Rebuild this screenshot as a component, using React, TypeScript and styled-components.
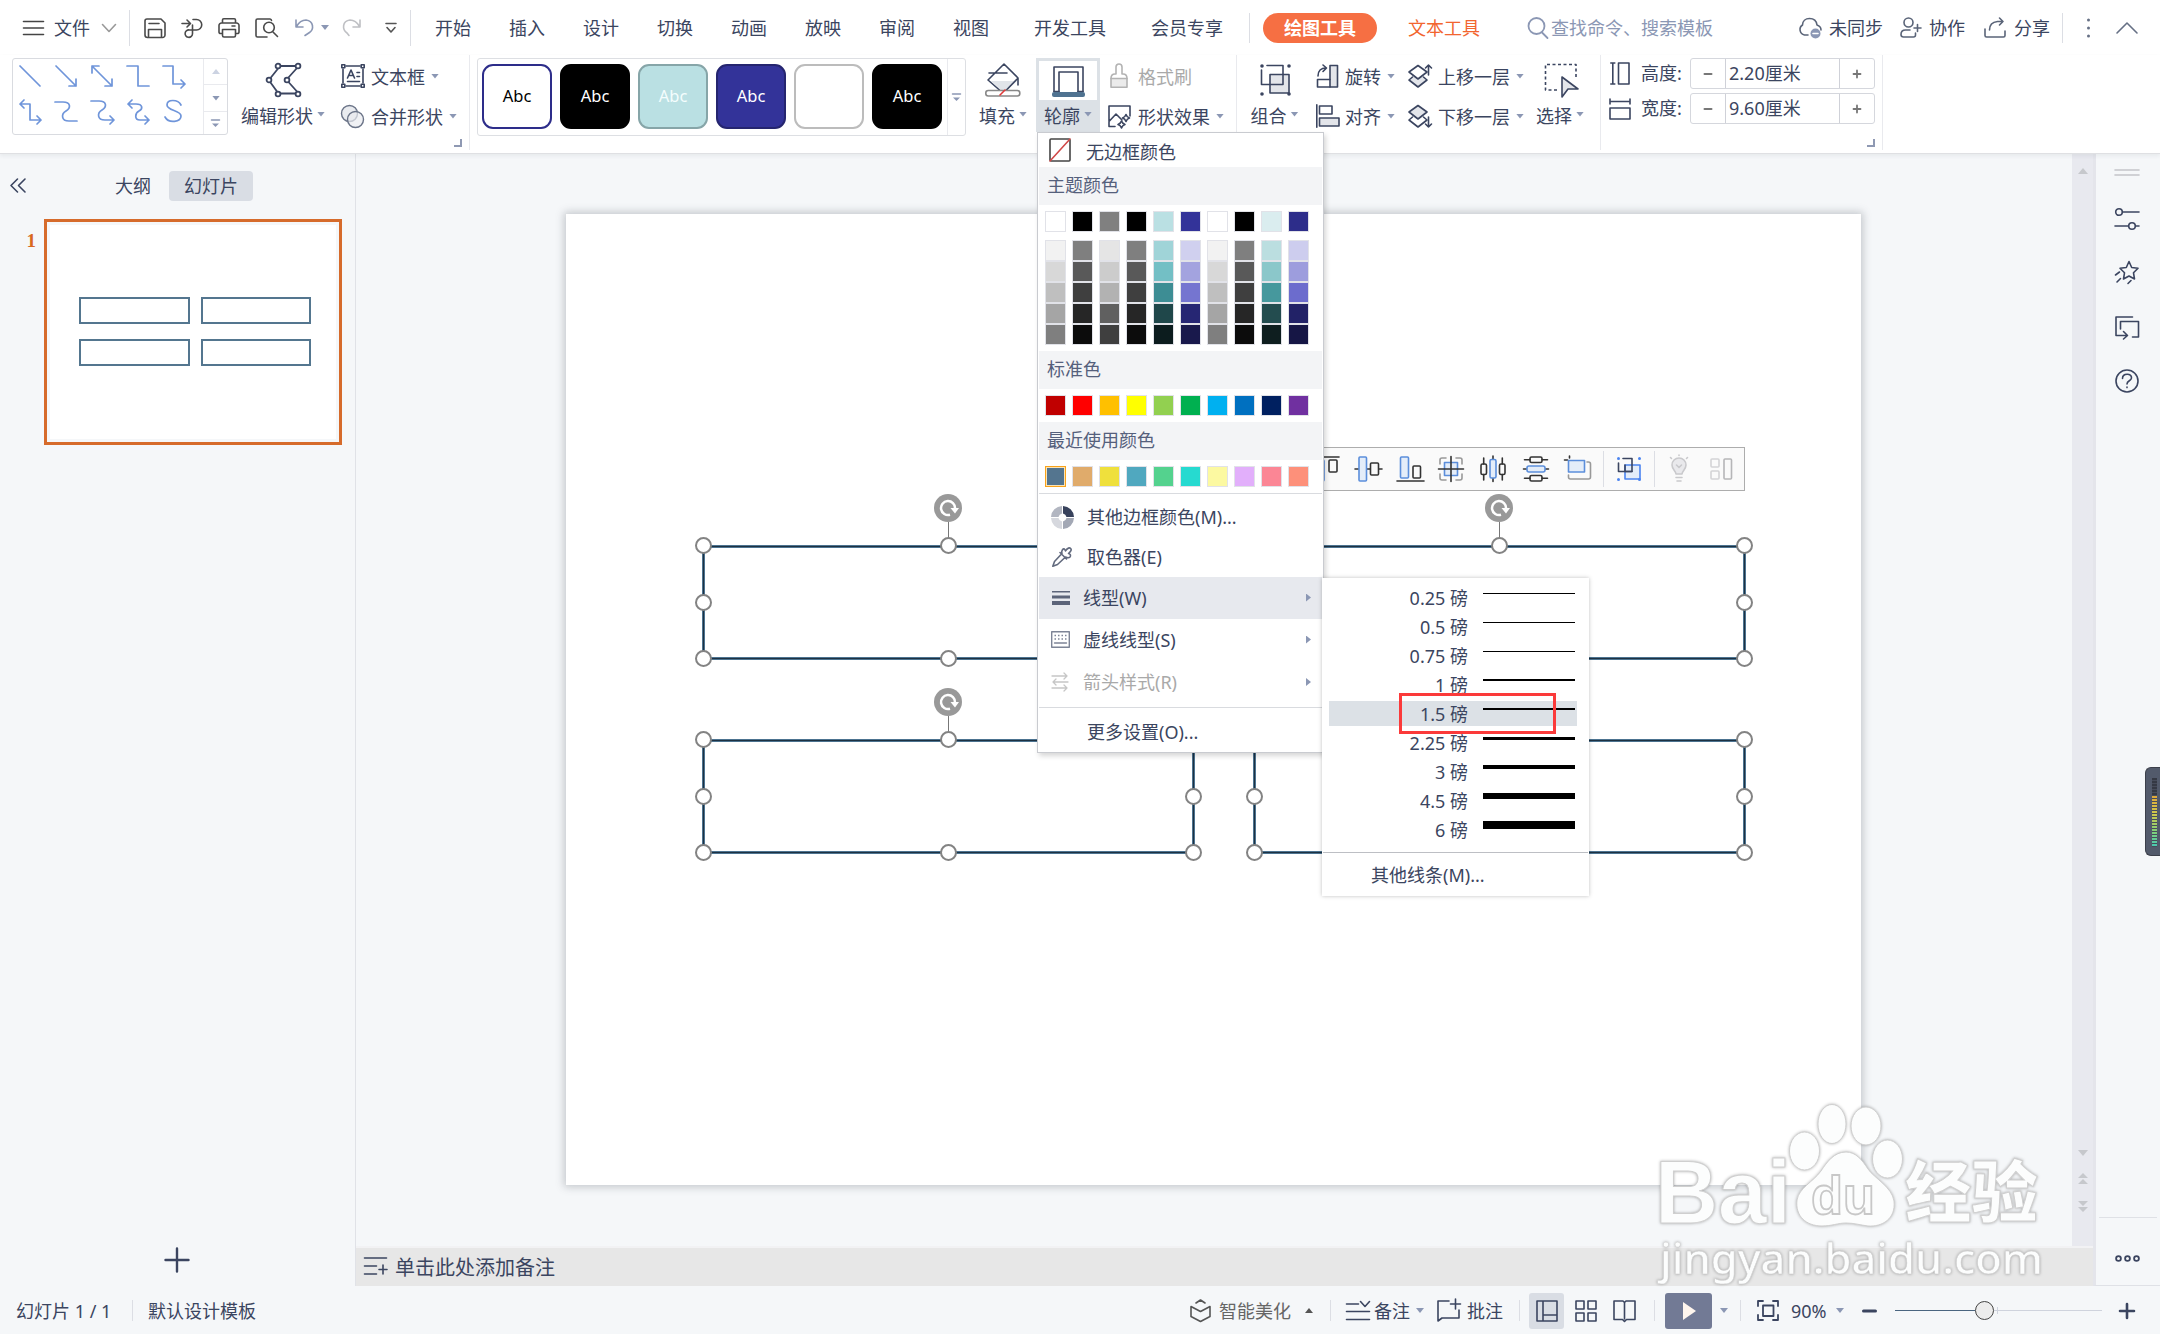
import React from 'react';
import styled, { createGlobalStyle, css } from 'styled-components';

const INK = '#3b4560';
const MUTED = '#8b97b4';

const Global = createGlobalStyle`
  * { box-sizing: border-box; }
  body { margin: 0; background: #fff; }
`;

const Window = styled.div`
  position: relative;
  width: 2160px;
  height: 1334px;
  display: flex;
  flex-direction: column;
  overflow: hidden;
  background: #f5f7f9;
  color: ${INK};
  font-family: 'Noto Sans', 'Noto Sans CJK SC', sans-serif;
  font-size: 18px;
  line-height: 1;
  font-weight: 400;
`;

/* ---------- shared parts ---------- */

const Svg = styled.svg<{ $ml?: number; $dy?: number }>`
  display: block;
  flex: none;
  overflow: visible;
  margin-left: ${(p) => p.$ml || 0}px;
  margin-top: ${(p) => p.$dy || 0}px;
`;

type IconProps = {
  w: number; h: number; c?: string; sw?: number; ml?: number; dy?: number; children: React.ReactNode;
};
const Icon = ({ w, h, c = INK, sw = 1.6, ml, dy, children }: IconProps) => (
  <Svg $ml={ml} $dy={dy} width={w} height={h} viewBox={`0 0 ${w} ${h}`} fill="none" stroke={c} strokeWidth={sw}
    strokeLinecap="round" strokeLinejoin="round">
    {children}
  </Svg>
);

const Caret = styled.i<{ $ml?: number; $up?: boolean; $c?: string }>`
  flex: none;
  width: 8px;
  height: 5px;
  margin-left: ${(p) => p.$ml || 0}px;
  margin-right: -1px;
  background: ${(p) => p.$c || MUTED};
  clip-path: ${(p) => (p.$up ? 'polygon(50% 0, 100% 100%, 0 100%)' : 'polygon(0 0, 100% 0, 50% 100%)')};
`;

const Text = styled.span<{ $ml?: number; $c?: string; $dy?: number }>`
  flex: none;
  white-space: nowrap;
  margin-left: ${(p) => p.$ml || 0}px;
  padding-top: ${(p) => p.$dy || 0}px;
  color: ${(p) => p.$c || 'inherit'};
`;

const Rule = styled.i<{ $ml?: number; $h: number }>`
  flex: none;
  width: 1px;
  height: ${(p) => p.$h}px;
  margin-left: ${(p) => p.$ml || 0}px;
  background: #dcdee4;
`;

const MoreMark = ({ c = MUTED }: { c?: string }) => (
  <Icon w={9} h={9} c={c} sw={1.5}>
    <path d="M0.5 1h8" />
    <path d="M1 4.5h7L4.500 8z" fill={c} stroke="none" />
  </Icon>
);

/* ---------- tab bar ---------- */

const TabBar = styled.header`
  display: flex;
  align-items: center;
  flex: none;
  height: 55px;
  padding-left: 23px;
  background: #fff;
`;

const Tabs = styled.nav`
  display: flex;
  gap: 38px;
  margin-left: 24px;
`;

const ActiveTab = styled.span`
  display: flex;
  align-items: center;
  justify-content: center;
  width: 114px;
  height: 30px;
  margin-left: 13px;
  border-radius: 15px;
  background: #f66f43;
  color: #fff;
  font-weight: 700;
`;

const TopTabs = () => (
  <TabBar>
    <Icon w={21} h={16} c="#444"><path d="M0.500 1.500h20M0.500 8h20M0.500 14.500h20" /></Icon>
    <Text $ml={10}>文件</Text>
    <Icon w={14} h={8} c="#999" ml={12}><path d="M0.5 0.500l6.500 7 6.500-7" /></Icon>
    <Rule $ml={13} $h={36} />
    <Icon w={22} h={20} c="#4a4a4a" ml={14}>
      <path d="M3 1h14l4 4v12a2.500 2.500 0 0 1-2.500 2.500h-15A2.500 2.500 0 0 1 1 17V3a2 2 0 0 1 2-2zM4.500 19v-7.500h13V19M5 5.500h10" />
    </Icon>
    <Icon w={22} h={20} c="#4a4a4a" ml={15}>
      <path d="M1 5.500h8M6 2l3.500 3.500L6 9M12 1.500h3.500a5 5 0 0 1 0 10.500H8.500a3.700 3.700 0 1 0 3 3.700V7" />
    </Icon>
    <Icon w={22} h={20} c="#4a4a4a" ml={15}>
      <path d="M4.500 5V2a1.300 1.300 0 0 1 1.300-1.300h10.400A1.300 1.300 0 0 1 17.500 2v3M4 15.500H2.500A1.500 1.500 0 0 1 1 14V7.500A2.500 2.500 0 0 1 3.500 5h15A2.500 2.500 0 0 1 21 7.500V14a1.500 1.500 0 0 1-1.500 1.500H18M4.500 11.500h13v6a1.500 1.500 0 0 1-1.500 1.500H6a1.500 1.500 0 0 1-1.500-1.500zM14 8h3" />
    </Icon>
    <Icon w={23} h={20} c="#4a4a4a" ml={15}>
      <path d="M16.500 2.500A1.600 1.600 0 0 0 15 1H2.500A1.500 1.500 0 0 0 1 2.500v15A1.500 1.500 0 0 0 2.500 19H12M18 14l4.500 4.500" />
      <circle cx="14" cy="9.500" r="5.300" />
    </Icon>
    <Icon w={18} h={17} c={MUTED} ml={17}><path d="M1 1v7h7M1.500 7.500C4 3 7.500 1 11 1c8 1 8 9.500 3.500 12.500L10 16.500" /></Icon>
    <Caret $ml={8} />
    <Icon w={18} h={17} c="#bfc0c4" ml={15}><path d="M17 1v7h-7M16.500 7.500C14 3 10.500 1 7 1c-8 1-8 9.500-3 13l2 2.500" /></Icon>
    <Icon w={12} h={11} c="#555" ml={24}><path d="M1 1.500h10M2 5.500l4 4.500 4-4.500" /></Icon>
    <Rule $ml={13} $h={36} />
    <Tabs>
      {['开始', '插入', '设计', '切换', '动画', '放映', '审阅', '视图'].map((t) => <Text key={t}>{t}</Text>)}
    </Tabs>
    <Text $ml={45}>开发工具</Text>
    <Text $ml={45}>会员专享</Text>
    <Rule $ml={26} $h={30} />
    <ActiveTab>绘图工具</ActiveTab>
    <Text $ml={31} $c="#f2652f">文本工具</Text>
    <Icon w={22} h={22} c={MUTED} ml={47} sw={1.8}><circle cx="9.500" cy="9" r="8" /><path d="M15 15.500l5.500 5.500" /></Icon>
    <Text $ml={2} $c={MUTED}>查找命令、搜索模板</Text>
    <Icon w={26} h={22} ml={85} c="#5a6478">
      <path d="M10 18H6.500A5.500 5.500 0 0 1 4.500 8C4.500 4 7.500 1.500 11.500 1.500S18.500 4 19 8c2.500.8 4 2.500 4 5" />
      <circle cx="17.500" cy="16.500" r="5" fill={MUTED} stroke="none" />
      <path d="M15 16.500h5" stroke="#fff" />
    </Icon>
    <Text $ml={5}>未同步</Text>
    <Icon w={22} h={21} ml={17} c="#5a6478">
      <circle cx="8.500" cy="5.500" r="4.500" />
      <path d="M15.500 16v2a2 2 0 0 1-2 2h-10A2.500 2.500 0 0 1 1 17.500C1 14.500 3 13 5.500 13H10M17.500 7.500v7M14 11h7" />
    </Icon>
    <Text $ml={7}>协作</Text>
    <Icon w={22} h={21} ml={19} c="#5a6478">
      <path d="M1 12v6.500A1.500 1.500 0 0 0 2.500 20h17a1.500 1.500 0 0 0 1.500-1.500V14M5.500 13c0-5 3-8 8-8.500H19M15.500 1L19 4.500 15.500 8" />
    </Icon>
    <Text $ml={8}>分享</Text>
    <Rule $ml={12} $h={30} />
    <Icon w={3} h={20} ml={24} c="none"><g fill="#667085"><circle cx="1.500" cy="2" r="1.500" /><circle cx="1.500" cy="10" r="1.500" /><circle cx="1.500" cy="18" r="1.500" /></g></Icon>
    <Icon w={22} h={12} ml={26} c="#667085"><path d="M1 11L11 1l10 10" /></Icon>
  </TabBar>
);

/* ---------- ribbon ---------- */

const RibbonBar = styled.section`
  position: relative;
  z-index: 1;
  display: flex;
  flex: none;
  height: 99px;
  padding-left: 12px;
  background: #fff;
  border-bottom: 1px solid #dfe0e3;
  box-shadow: 0 2px 4px rgba(40, 50, 70, 0.07);
`;

const Group = styled.div<{ $w: number }>`
  position: relative;
  display: flex;
  flex: none;
  width: ${(p) => p.$w}px;
  height: 95px;
  border-right: 1px solid #e9eaee;
`;

const CornerMark = styled.i`
  position: absolute;
  right: 7px;
  bottom: 3px;
  width: 8px;
  height: 8px;
  border: solid #8f99b3;
  border-width: 0 2px 2px 0;
`;

const ShapeGallery = styled.div`
  display: grid;
  grid-template-columns: 191px 23px;
  flex: none;
  width: 216px;
  height: 77px;
  margin-top: 3px;
  border: 1px solid #d9dbe0;
  border-radius: 3px;
`;

const ShapeGrid = styled.div`
  display: grid;
  grid-template-columns: repeat(5, 22px);
  grid-template-rows: 24px 24px;
  gap: 11px 14px;
  padding: 6px 0 0 6px;
  border-right: 1px solid #e9eaee;
`;

const GalleryScroll = styled.div`
  display: grid;
  grid-template-rows: 25px 27px 23px;
  > * + * { border-top: 1px solid #e9eaee; }
`;

const ScrollCell = styled.div`
  display: flex;
  align-items: center;
  justify-content: center;
`;

const Large = styled.div<{ $w: number; $ml?: number; $on?: boolean }>`
  display: flex;
  flex-direction: column;
  flex: none;
  width: ${(p) => p.$w}px;
  height: 74px;
  margin: 3px 0 0 ${(p) => p.$ml || 0}px;
  ${(p) => p.$on && css`
    background: #dce1e6;
    padding: 0 3px;
  `}
`;

const LargeIcon = styled.div<{ $on?: boolean }>`
  display: flex;
  align-items: center;
  justify-content: center;
  height: ${(p) => (p.$on ? 39 : 44)}px;
  margin-top: ${(p) => (p.$on ? 3 : 0)}px;
  margin-bottom: ${(p) => (p.$on ? 2 : 0)}px;
  background: ${(p) => (p.$on ? '#fff' : 'none')};
`;

const LargeLabel = styled.div`
  display: flex;
  align-items: center;
  justify-content: center;
  gap: 4px;
  height: 28px;
  margin-left: -1px;
  ${Caret} { margin-top: -4px; }
`;

const Stack = styled.div<{ $ml?: number }>`
  display: flex;
  flex-direction: column;
  flex: none;
  margin: 1px 0 0 ${(p) => p.$ml || 0}px;
`;

const Tool = styled.div<{ $c?: string }>`
  display: flex;
  align-items: center;
  height: 40px;
  color: ${(p) => p.$c || 'inherit'};
`;

const IconSlot = styled.span<{ $w: number }>`
  display: flex;
  flex: none;
  width: ${(p) => p.$w}px;
`;

const StyleGallery = styled.div`
  display: flex;
  flex: none;
  width: 489px;
  height: 78px;
  margin: 3px 0 0 7px;
  padding: 5px 0 0 4px;
  border: 1px solid #dddfe3;
  border-radius: 3px;
`;

const StyleTile = styled.div<{ $bg: string; $bd: string; $c: string }>`
  display: flex;
  align-items: center;
  justify-content: center;
  flex: none;
  width: 70px;
  height: 65px;
  margin-right: 8px;
  border: 2px solid ${(p) => p.$bd};
  border-radius: 11px;
  background: ${(p) => p.$bg};
  color: ${(p) => p.$c};
  font-size: 16.500px;
`;

const GalleryMore = styled.div`
  display: flex;
  align-items: center;
  justify-content: center;
  width: 19px;
  height: 76px;
  margin: -5px 0 0 -3px;
  border-left: 1px solid #e9eaee;
`;

const Spin = styled.div`
  display: grid;
  grid-template-columns: 35px 113px 35px;
  align-items: center;
  width: 185px;
  height: 31px;
  border: 1px solid #d5d7dd;
  border-radius: 3px;
`;

const SpinButton = styled.span<{ $right?: boolean }>`
  display: flex;
  align-items: center;
  justify-content: center;
  height: 29px;
  border: 0 solid #cfd1d8;
  border-width: ${(p) => (p.$right ? '0 0 0 1px' : '0 1px 0 0')};
`;

const SizeRow = styled.div`
  display: flex;
  align-items: center;
  height: 31px;
  margin-bottom: 4px;
`;

const SizeLabel = styled.span`
  width: 49px;
  margin-left: 11px;
  padding-bottom: 2px;
`;

const SizeValue = styled.span`
  padding: 0 0 2px 3px;
`;

const SizeStack = styled.div`
  margin: 3px 0 0 9px;
`;

const connectors = [
  'M1 1l20 20',
  'M1 1l20 20M21 14v7h-7',
  'M1 1l20 20M21 14v7h-7M1 8V1h7',
  'M0 1h11v20h11',
  'M0 1h10v18h12M18 15l4 4-4 4',
  'M1 4h10v16h11M5 0L1 4l4 4M18 16l4 4-4 4',
  'M0 2h8c8 0 8 6 3 9s-5 10 3 10h8',
  'M0 1h8c8 0 8 6 3 9s-5 10 3 10h8M19 16l4 4-4 4',
  'M1 4h8c7 0 7 5 3 7s-5 9 1 9h9M5 0L1 4l4 4M18 16l4 4-4 4',
  'M18 5C15-1 4-1 4 5s14 5 14 11-12 8-16 1',
];

const tiles = [
  { bg: '#fff', bd: '#2d2d8a', c: '#000', t: 'Abc' },
  { bg: '#000', bd: '#000', c: '#fff', t: 'Abc' },
  { bg: '#bae0e3', bd: '#86a5a8', c: '#f4fdfd', t: 'Abc' },
  { bg: '#333399', bd: '#25256f', c: '#fff', t: 'Abc' },
  { bg: '#fff', bd: '#bcbcbc', c: '#fff', t: '' },
  { bg: '#000', bd: '#000', c: '#fff', t: 'Abc' },
];

const LayerIcon = ({ down }: { down?: boolean }) => (
  <Icon w={24} h={24}>
    <path d="M4.500 13L1 16l9 7 9-7-3.500-3" fill={down ? 'none' : '#e3e5ea'} />
    <path d="M10 1.500l9 6.500-9 7L1 8z" fill={down ? '#e3e5ea' : '#fff'} />
    <path d={down ? 'M20.500 13v10M17.500 20l3 3 3-3' : 'M20.500 11V1M17.500 4l3-3 3 3'} />
  </Icon>
);

const Ribbon = () => (
  <RibbonBar>
    <Group $w={458}>
      <ShapeGallery>
        <ShapeGrid>
          {connectors.map((d, i) => <Icon key={i} w={22} h={24} c="#6f95da" sw={1.700}><path d={d} /></Icon>)}
        </ShapeGrid>
        <GalleryScroll>
          <ScrollCell><Caret $up $c="#ccd3e2" /></ScrollCell>
          <ScrollCell><Caret /></ScrollCell>
          <ScrollCell><MoreMark /></ScrollCell>
        </GalleryScroll>
      </ShapeGallery>
      <Large $w={84} $ml={13}>
        <LargeIcon>
          <Icon w={36} h={34} ml={1} sw={1.800}>
            <path d="M14 3h16.500M12.500 5L4.500 15M4.500 19.500L11 28.500M14 30.500h16.500M31 5L22 15M22 18.500l9 10" />
            <g fill="#fff"><circle cx="12" cy="3" r="2.400" /><circle cx="32" cy="3" r="2.400" /><circle cx="3" cy="17" r="2.400" /><circle cx="21" cy="17" r="2.400" /><circle cx="12" cy="31" r="2.400" /><circle cx="32" cy="31" r="2.400" /></g>
          </Icon>
        </LargeIcon>
        <LargeLabel><Text>编辑形状</Text><Caret /></LargeLabel>
      </Large>
      <Stack $ml={16}>
        <Tool>
          <IconSlot $w={30}>
            <Icon w={24} h={24}>
              <path d="M5 2h14M5 22h14M2 5v14M22 5v14" />
              <g><rect x="0.800" y="0.800" width="3" height="3" /><rect x="20.200" y="0.800" width="3" height="3" /><rect x="0.800" y="20.200" width="3" height="3" /><rect x="20.200" y="20.200" width="3" height="3" /></g>
              <path d="M6.500 14L10 6l3.500 8M7.500 11.500h5M16 8.500h2.500M16 12.500h2.500M6.500 17.500h12" />
            </Icon>
          </IconSlot>
          <Text $dy={2}>文本框</Text><Caret $ml={6} />
        </Tool>
        <Tool>
          <IconSlot $w={30}>
            <Icon w={23} h={23} c="#6b7488" sw={1.400}>
              <circle cx="8.500" cy="8.500" r="8" fill="#e9ebef" /><circle cx="14.500" cy="14.500" r="8" fill="#e9ebef" fillOpacity="0.700" />
            </Icon>
          </IconSlot>
          <Text $dy={2}>合并形状</Text><Caret $ml={6} />
        </Tool>
      </Stack>
      <CornerMark />
    </Group>

    <Group $w={767}>
      <StyleGallery>
        {tiles.map((s, i) => <StyleTile key={i} $bg={s.bg} $bd={s.bd} $c={s.c}>{s.t}</StyleTile>)}
        <GalleryMore><MoreMark /></GalleryMore>
      </StyleGallery>
      <Large $w={62} $ml={6}>
        <LargeIcon>
          <Icon w={36} h={34}>
            <path d="M6 18h26l-11 10h-4z" fill="#e1e4e9" stroke="none" />
            <path d="M19 1L3 17l12 10.500M19 1l14 14M33 15v7M33 15L21 27.500M4 10h18" />
            <rect x="0.800" y="27.500" width="34" height="5.500" rx="2.500" fill="#fff" stroke="#888" />
            <path d="M15 32l5-5" stroke="#e03a3a" />
          </Icon>
        </LargeIcon>
        <LargeLabel><Text>填充</Text><Caret /></LargeLabel>
      </Large>
      <Large $w={64} $ml={2} $on>
        <LargeIcon $on>
          <Icon w={34} h={31} dy={2}>
            <path d="M3 25.500V1h29v24.500M8 25.500V6h19v19.500" />
            <path d="M3 25.500h5M27 25.500h5" />
            <rect x="1" y="26" width="33" height="5" rx="2" fill="#4f7290" stroke="none" />
          </Icon>
        </LargeIcon>
        <LargeLabel><Text>轮廓</Text><Caret /></LargeLabel>
      </Large>
      <Stack $ml={8}>
        <Tool $c="#a9a9a9">
          <IconSlot $w={30}>
            <Icon w={24} h={24} c="#b3b3b3">
              <path d="M3 14.500v8.700h16V14.500" fill="#ebebeb" />
              <path d="M3 14.500c0-3 1.500-4.500 4-4.500h1V3a3 3 0 0 1 6 0v7h1c2.500 0 4 1.500 4 4.500z" fill="#fff" />
            </Icon>
          </IconSlot>
          <Text $dy={2}>格式刷</Text>
        </Tool>
        <Tool>
          <IconSlot $w={30}>
            <Icon w={24} h={23}>
              <path d="M7 21.500H1V1h21v10M1 16.500L8 9l6 6M17 4.500" />
              <path d="M18 9.500c.7 2 1.500 3 3.500 3.500-2 .6-2.800 1.500-3.500 3.500-.7-2-1.500-3-3.500-3.500 2-.6 2.800-1.500 3.500-3.500zM13.500 16c.7 2 1.500 2.800 3.500 3.500-2 .6-2.800 1.500-3.500 3.500-.7-2-1.500-2.900-3.500-3.500 2-.7 2.800-1.500 3.500-3.500z" fill="#fff" />
            </Icon>
          </IconSlot>
          <Text $dy={2}>形状效果</Text><Caret $ml={6} />
        </Tool>
      </Stack>
    </Group>

    <Group $w={364}>
      <Large $w={61} $ml={7}>
        <LargeIcon>
          <Icon w={31} h={32} ml={1}>
            <rect x="9.500" y="11" width="20" height="18" fill="#e3e5ea" stroke="none" />
            <path d="M7 1.500h16v19H1.500V6" /><path d="M10 10.500h19V29H10z" />
            <g fill={INK} stroke="none"><circle cx="2" cy="2" r="1.800" /><circle cx="29" cy="2" r="1.800" /><circle cx="2" cy="30" r="1.800" /><circle cx="29" cy="30" r="1.800" /></g>
          </Icon>
        </LargeIcon>
        <LargeLabel><Text>组合</Text><Caret /></LargeLabel>
      </Large>
      <Stack $ml={11}>
        <Tool>
          <IconSlot $w={29}>
            <Icon w={24} h={24}>
              <rect x="14" y="1.500" width="7.500" height="21.500" fill="#e3e5ea" />
              <path d="M9.500 23H1.500v-7.500h8M14 15.500H9.500M9.500 23H14M2 12C2 7 5 4 10 4M7 1l3.500 3L7 7.500" />
            </Icon>
          </IconSlot>
          <Text $dy={2}>旋转</Text><Caret $ml={6} />
        </Tool>
        <Tool>
          <IconSlot $w={29}>
            <Icon w={24} h={24}>
              <path d="M0.800 0.800v22.500" /><rect x="3.500" y="2" width="12.500" height="8" /><rect x="3.500" y="14" width="19.500" height="8" fill="#e3e5ea" />
            </Icon>
          </IconSlot>
          <Text $dy={2}>对齐</Text><Caret $ml={6} />
        </Tool>
      </Stack>
      <Stack $ml={14}>
        <Tool><IconSlot $w={30}><LayerIcon /></IconSlot><Text $dy={2}>上移一层</Text><Caret $ml={6} /></Tool>
        <Tool><IconSlot $w={30}><LayerIcon down /></IconSlot><Text $dy={2}>下移一层</Text><Caret $ml={6} /></Tool>
      </Stack>
      <Large $w={60} $ml={7}>
        <LargeIcon>
          <Icon w={36} h={35} ml={4}>
            <path d="M13 27H1.500V1.500H32V15" strokeDasharray="3 2.500" strokeLinecap="butt" />
            <path d="M18 14v20l6-8h10z" fill="#e3e5ea" />
          </Icon>
        </LargeIcon>
        <LargeLabel><Text>选择</Text><Caret /></LargeLabel>
      </Large>
    </Group>

    <Group $w={282}>
      <SizeStack>
        <SizeRow>
          <Icon w={20} h={23}><path d="M0.800 1h4M0.800 22h4M2.800 1v21" /><rect x="8.500" y="1" width="10.500" height="21" /></Icon>
          <SizeLabel>高度:</SizeLabel>
          <Spin>
            <SpinButton><Icon w={8} h={2} c="#777" sw={2}><path d="M0.500 1h7" /></Icon></SpinButton>
            <SizeValue>2.20厘米</SizeValue>
            <SpinButton $right><Icon w={8} h={8} c="#777" sw={1.800}><path d="M0.500 4h7M4 0.500v7" /></Icon></SpinButton>
          </Spin>
        </SizeRow>
        <SizeRow>
          <Icon w={20} h={20}><path d="M0 2.500h20M0 0v5M20 0v5" /><rect x="0" y="9" width="20" height="11" /></Icon>
          <SizeLabel>宽度:</SizeLabel>
          <Spin>
            <SpinButton><Icon w={8} h={2} c="#777" sw={2}><path d="M0.500 1h7" /></Icon></SpinButton>
            <SizeValue>9.60厘米</SizeValue>
            <SpinButton $right><Icon w={8} h={8} c="#777" sw={1.800}><path d="M0.500 4h7M4 0.500v7" /></Icon></SpinButton>
          </Spin>
        </SizeRow>
      </SizeStack>
      <CornerMark />
    </Group>
  </RibbonBar>
);

/* ---------- slide list ---------- */

const Body = styled.main`
  display: flex;
  flex: none;
  height: 1132px;
`;

const SidePanel = styled.aside`
  display: flex;
  flex-direction: column;
  flex: none;
  width: 356px;
  border-right: 1px solid #e0e2e7;
`;

const SideTabs = styled.div`
  display: flex;
  align-items: center;
  height: 30px;
  margin-top: 17px;
  padding-left: 10px;
`;

const SlidesTab = styled.span`
  display: flex;
  align-items: center;
  justify-content: center;
  width: 84px;
  height: 30px;
  margin-left: 18px;
  border-radius: 4px;
  background: #d9dde4;
`;

const ThumbRow = styled.div`
  display: flex;
  flex: 1;
  align-items: flex-start;
  margin-top: 18px;
`;

const ThumbNumber = styled.span`
  width: 44px;
  padding: 12px 8px 0 0;
  text-align: right;
  color: #d8681f;
  font-family: 'Liberation Serif', serif;
  font-weight: 700;
  font-size: 19px;
`;

const Thumb = styled.div`
  display: grid;
  grid-template-columns: 111px 110px;
  grid-template-rows: 27px 27px;
  gap: 15px 11px;
  align-content: start;
  width: 298px;
  height: 226px;
  padding: 75px 0 0 32px;
  border: 3px solid #d66b2b;
  box-shadow: inset 0 0 0 3px #f5f7f9;
  background: #fff;
`;

const ThumbShape = styled.div`
  border: 2px solid #54768f;
`;

const AddSlide = styled.div`
  display: flex;
  justify-content: center;
  padding: 0 2px 14px 0;
`;

const Slides = () => (
  <SidePanel>
    <SideTabs>
      <Icon w={16} h={15} dy={-2}><path d="M7.500 1L1 7.500l6.500 6.500M15 1L8.500 7.500l6.500 6.500" /></Icon>
      <Text $ml={89}>大纲</Text>
      <SlidesTab>幻灯片</SlidesTab>
    </SideTabs>
    <ThumbRow>
      <ThumbNumber>1</ThumbNumber>
      <Thumb><ThumbShape /><ThumbShape /><ThumbShape /><ThumbShape /></Thumb>
    </ThumbRow>
    <AddSlide><Icon w={24} h={24} sw={2.400}><path d="M0.500 12h23M12 0.500v23" /></Icon></AddSlide>
  </SidePanel>
);

/* ---------- stage ---------- */

const Center = styled.div`
  display: flex;
  flex-direction: column;
  flex: none;
  width: 1737px;
`;

const Stage = styled.div`
  display: flex;
  flex: none;
  justify-content: space-between;
  height: 1092px;
  padding-left: 210px;
`;

const Slide = styled.div`
  position: relative;
  width: 1295px;
  height: 971px;
  margin-top: 60px;
  background: #fff;
  box-shadow: 0 0 8px 2px rgba(70, 75, 85, 0.28);
`;

const ShapeBox = styled.div<{ $x: number; $y: number }>`
  position: absolute;
  left: ${(p) => p.$x}px;
  top: ${(p) => p.$y}px;
  width: 493px;
  height: 115px;
  border: 1px solid #4c7390;
  box-shadow: inset 0 0 0 1px #1d3142, inset 0 0 0 2px #4c7390;
`;

const Handle = styled.i<{ $x: number; $y: number }>`
  position: absolute;
  left: ${(p) => p.$x - 9.5}px;
  top: ${(p) => p.$y - 9.5}px;
  width: 17px;
  height: 17px;
  border: 2px solid #838383;
  border-radius: 50%;
  background: #fff;
`;

const Rotator = styled.div`
  position: absolute;
  left: 231px;
  top: -52px;
`;

const ScrollTrack = styled.div`
  display: flex;
  flex-direction: column;
  align-items: center;
  width: 21px;
  padding: 14px 0 33px;
  background: #e8e9ef;
`;

const ScrollSpace = styled.div`
  flex: 1;
`;

const Notes = styled.div`
  display: flex;
  align-items: center;
  flex: 1;
  padding-left: 8px;
  border-top: 2px solid #f2f2f4;
  background: #e7e7e7;
  font-size: 20px;
`;

const Selected = ({ x, y }: { x: number; y: number }) => (
  <ShapeBox $x={x} $y={y}>
    <Rotator>
      <Svg width={28} height={44} viewBox="0 0 28 44" fill="none">
        <path d="M14.500 28v18" stroke="#777" />
        <circle cx="14" cy="14" r="14" fill="#999" />
        <path d="M16 20.800a7 7 0 1 1 5-6.300" stroke="#fff" strokeWidth="2.500" />
        <path d="M16.500 14h8.500l-4 5.500z" fill="#fff" />
      </Svg>
    </Rotator>
    {[1, 246, 491].flatMap((hx) => [0, 57, 113].filter((hy) => !(hx === 246 && hy === 57))
      .map((hy) => <Handle key={`${hx}-${hy}`} $x={hx + 0.5} $y={hy + 0.5} />))}
  </ShapeBox>
);

const Tri = ({ d, h }: { d: string; h: number }) => (
  <Icon w={10} h={h} c="none"><path d={d} fill="#c6c8cc" /></Icon>
);

const StageArea = () => (
  <Center>
    <Stage>
      <Slide>
        <Selected x={136} y={331} />
        <Selected x={687} y={331} />
        <Selected x={136} y={525} />
        <Selected x={687} y={525} />
      </Slide>
      <ScrollTrack>
        <Tri h={6} d="M0 6l5-6 5 6z" />
        <ScrollSpace />
        <Tri h={23} d="M0 0l5 6 5-6z" />
        <Tri h={28} d="M0 5l5-5 5 5zM0 11l5-5 5 5z" />
        <Tri h={12} d="M0 0l5 5 5-5zM0 6l5 5 5-5z" />
      </ScrollTrack>
    </Stage>
    <Notes>
      <Icon w={24} h={18} dy={-2}><path d="M0.500 1h22M0.500 9h12M0.500 17h12M19 8v9M15 12.500h8" /></Icon>
      <Text $ml={7} $dy={1}>单击此处添加备注</Text>
    </Notes>
  </Center>
);

/* ---------- task pane strip ---------- */

const Strip = styled.aside`
  display: flex;
  flex-direction: column;
  align-items: center;
  flex: none;
  width: 67px;
  padding: 15px 0 0;
  border-left: 3px solid #e4e5eb;
  border-bottom: 1px solid #dfe1e6;
`;

const StripIcons = styled.div`
  display: flex;
  flex-direction: column;
  flex: 1;
  width: 27px;
`;

const StripFoot = styled.div`
  display: flex;
  justify-content: center;
  width: 58px;
  height: 68px;
  padding: 37px 2px 0 0;
  border-top: 1px solid #dfe1e6;
`;

const TaskStrip = () => (
  <Strip>
    <StripIcons>
      <Icon w={24} h={7} c="#c3c5c9"><path d="M0 1h24M0 6h24" /></Icon>
      <Icon w={24} h={22} dy={32}><circle cx="4" cy="4" r="3.300" /><path d="M7.500 4H24M0 18h13.500M20.500 18H24" /><circle cx="17" cy="18" r="3.300" /></Icon>
      <Icon w={24} h={25} dy={30}>
        <path d="M14 1.500l2.700 6 6.300.8-4.500 4.500 1 6.200-5.500-3-5.500 3 1-6.200L5 8.300l6.300-.8zM4.500 12L0.500 15M5.500 18.500L2 22M16 20.500l-3 3" />
      </Icon>
      <Icon w={24} h={22} dy={31}><path d="M17.500 1H1v18.500h11M8.500 15.500l4 4-4 3.500M5.500 13V5.500H23.500V21H17.500" /></Icon>
      <Icon w={24} h={24} dy={31}><circle cx="12" cy="12" r="11" /><path d="M7.500 9.500C7.500 4 17 4 16.500 9c-.3 3-4.500 2.500-4.500 6M12 18v.6" /></Icon>
    </StripIcons>
    <StripFoot>
      <Icon w={25} h={7} sw={1.800}><circle cx="3.500" cy="3.500" r="2.400" /><circle cx="12.500" cy="3.500" r="2.400" /><circle cx="21.500" cy="3.500" r="2.400" /></Icon>
    </StripFoot>
  </Strip>
);

/* ---------- status bar ---------- */

const Status = styled.footer`
  display: flex;
  align-items: center;
  flex: 1;
  padding: 1px 0 0 16px;
`;

const StatusLeft = styled.div`
  display: flex;
  align-items: center;
  width: 1174px;
`;

const SlideCount = styled.span`
  width: 115px;
  white-space: nowrap;
`;

const ViewButton = styled.span`
  display: flex;
  align-items: center;
  justify-content: center;
  width: 35px;
  height: 36px;
  margin-left: 9px;
  border-radius: 3px;
  background: #d9dde4;
`;

const PlayButton = styled.span`
  display: flex;
  align-items: center;
  justify-content: center;
  width: 47px;
  height: 36px;
  margin-left: 10px;
  border-radius: 3px;
  background: #727a95;
`;

const ZoomTrack = styled.div`
  display: flex;
  align-items: center;
  width: 207px;
  height: 20px;
  margin-left: 18px;
`;

const TrackPart = styled.i<{ $w: number; $c: string; $h: number }>`
  width: ${(p) => p.$w}px;
  height: ${(p) => p.$h}px;
  background: ${(p) => p.$c};
`;

const Knob = styled.i`
  width: 19px;
  height: 19px;
  border: 1.5px solid #444;
  border-radius: 50%;
  background: #ececec;
`;

const ZoomValue = styled.span`
  width: 37px;
  margin-left: 12px;
`;

const StatusLine = () => (
  <Status>
    <StatusLeft>
      <SlideCount>幻灯片 1 / 1</SlideCount>
      <Rule $ml={1} $h={21} />
      <Text $ml={15}>默认设计模板</Text>
    </StatusLeft>
    <Icon w={21} h={23} c="#555"><path d="M6 4l4.500-3L15 4M1 7.500v10l9.500 5 9.500-5v-10l-9.500 5z" /></Icon>
    <Text $ml={8} $c="#666">智能美化</Text>
    <Caret $ml={14} $up $c="#555" />
    <Rule $ml={18} $h={21} />
    <Icon w={24} h={20} ml={15}><path d="M0.500 3h12M0.500 10.500h23M0.500 18.500h23M14.500 0.500l4.500 5 4.500-5" /></Icon>
    <Text $ml={4}>备注</Text>
    <Caret $ml={6} />
    <Icon w={24} h={23} ml={14}><path d="M12 2H1v20l4-3h17v-8M18.500 0v10M13.500 5h10" /></Icon>
    <Text $ml={6}>批注</Text>
    <Rule $ml={16} $h={21} />
    <ViewButton><Icon w={22} h={22}><path d="M1 1h20v20H1zM7 1v20M7 15h14" /></Icon></ViewButton>
    <Icon w={22} h={22} ml={11}>
      <rect x="1" y="1" width="8" height="8" /><rect x="13" y="1" width="8" height="8" /><rect x="1" y="13" width="8" height="8" /><rect x="13" y="13" width="8" height="8" />
    </Icon>
    <Icon w={23} h={22} ml={16}><path d="M11.500 2.500L10 1H1v18.500h8.500l2 2 2-2H22V1h-9zM11.500 2.500V19" /></Icon>
    <Rule $ml={18} $h={21} />
    <PlayButton><Icon w={14} h={18} c="none"><path d="M1 0l13 9L1 18z" fill="#fff6ee" /></Icon></PlayButton>
    <Caret $ml={8} />
    <Rule $ml={13} $h={21} />
    <Icon w={22} h={21} ml={16} sw={1.800}><path d="M1 6V1h5M16 1h5v5M21 15v5h-5M6 20H1v-5" /><rect x="6" y="5.500" width="10.500" height="10.500" /></Icon>
    <ZoomValue>90%</ZoomValue>
    <Caret $ml={8} />
    <Icon w={15} h={4} ml={19} sw={3}><path d="M1.500 2h12" /></Icon>
    <ZoomTrack>
      <TrackPart $w={80} $h={1} $c="#4a6580" />
      <Knob />
      <TrackPart $w={3} $h={1} $c="#cfd3dd" />
      <TrackPart $w={1} $h={7} $c="#cfd3dd" />
      <TrackPart $w={104} $h={1} $c="#cfd3dd" />
    </ZoomTrack>
    <Icon w={16} h={16} ml={17} sw={2.600}><path d="M1 8h14M8 1v14" /></Icon>
  </Status>
);

/* ---------- floating align toolbar ---------- */

const FloatBar = styled.div`
  position: absolute;
  left: 1290px;
  top: 447px;
  display: flex;
  align-items: center;
  width: 455px;
  height: 44px;
  padding: 0 0 1px 22px;
  border: 1px solid #adadad;
  background: #fafafa;
`;

const BLUE = '#5b8edb';
const PALE = '#e4edf9';

const AlignBar = () => (
  <FloatBar>
    <Icon w={27} h={26} c="#333"><path d="M0 1h26" /><rect x="3" y="4" width="8" height="21" rx="1" stroke={BLUE} fill={PALE} /><rect x="16" y="4" width="8" height="12" rx="1" /></Icon>
    <Icon w={27} h={26} c="#333" ml={15}><path d="M0 13h4M11 13h4M24 13h3" /><rect x="4" y="1" width="7.500" height="24" rx="1" stroke={BLUE} fill={PALE} /><rect x="15.500" y="7" width="8" height="12" rx="1" /></Icon>
    <Icon w={27} h={26} c="#333" ml={15}><path d="M0 25h27" /><rect x="3.500" y="1" width="8" height="21" rx="1" stroke={BLUE} fill={PALE} /><rect x="16" y="10" width="7.500" height="12" rx="1" /></Icon>
    <Icon w={26} h={26} c="#333" ml={14}>
      <path d="M2 8V4a2 2 0 0 1 2-2h4M18 2h4a2 2 0 0 1 2 2v4M24 18v4a2 2 0 0 1-2 2h-4M8 24H4a2 2 0 0 1-2-2v-4" stroke="#999" />
      <rect x="6.500" y="6.500" width="13" height="13" stroke={BLUE} fill={PALE} /><path d="M13 0.500v25M0.500 13h25" />
    </Icon>
    <Icon w={26} h={26} c="#333" ml={16}>
      <rect x="1" y="8" width="5.500" height="10.500" rx="1.500" /><rect x="19.500" y="8" width="5.500" height="10.500" rx="1.500" />
      <path d="M3.700 2v6M3.700 18.500V24M22.300 2v6M22.300 18.500V24M13 0v3M13 22v3.500" /><rect x="10" y="3.500" width="6" height="18.500" rx="1.500" stroke={BLUE} fill={PALE} />
    </Icon>
    <Icon w={26} h={26} c="#333" ml={17}>
      <rect x="7" y="1" width="12" height="5.500" rx="1.500" /><rect x="7" y="19.500" width="12" height="5.500" rx="1.500" />
      <path d="M1.500 3.700H7M19 3.700h5.500M1.500 22.300H7M19 22.300h5.500M0.500 13h3M22.500 13h3" /><rect x="4" y="10" width="18" height="6" rx="2" stroke={BLUE} fill={PALE} />
    </Icon>
    <Icon w={27} h={26} c="#333" ml={15}>
      <path d="M23 6h1.500a2 2 0 0 1 2 2v13a2 2 0 0 1-2 2h-18a2 2 0 0 1-2-2v-2" stroke="#999" /><path d="M0.500 4h3M5.500 0v2" />
      <rect x="4.500" y="4.500" width="16" height="11.500" stroke={BLUE} fill={PALE} />
    </Icon>
    <Rule $ml={12} $h={36} />
    <Icon w={24} h={24} ml={13}>
      <rect x="8" y="8" width="15" height="14" fill={PALE} stroke="#4b84f0" /><path d="M6 1.500h9v13H1.500V6" stroke={INK} /><path d="M8 8v6.500h7" stroke={INK} />
      <g fill="#4b84f0" stroke="none"><circle cx="1.500" cy="1.500" r="1.500" /><circle cx="22.500" cy="1.500" r="1.500" /><circle cx="1.500" cy="22.500" r="1.500" /><circle cx="22.500" cy="22.500" r="1.500" /></g>
    </Icon>
    <Rule $ml={13} $h={36} />
    <Icon w={20} h={27} ml={14} c="#c9c9cc">
      <path d="M7 19c0-3-4-4.500-4-9a7 7 0 0 1 14 0c0 4.500-4 6-4 9z" fill="#e9e9ec" /><path d="M7.500 10l2.500 2.500 2.500-2.500M7 22.500h6M8 26h4M10 0v.5M1.500 2.500l1 1M18.500 2.500l-1 1" />
    </Icon>
    <Icon w={23} h={22} ml={21} c="#d4d4d6">
      <rect x="1" y="1" width="8" height="8" rx="1" /><rect x="1" y="13" width="8" height="8" rx="1" /><rect x="14" y="1" width="7.500" height="20" rx="1" stroke="#b6b6b8" />
    </Icon>
  </FloatBar>
);

/* ---------- outline menu ---------- */

const Menu = styled.div`
  position: absolute;
  left: 1037px;
  top: 132px;
  z-index: 2;
  width: 287px;
  height: 621px;
  border: 1px solid #c9cbd0;
  padding: 0 1px;
  background: #fff;
  box-shadow: 2px 3px 5px rgba(0, 0, 0, 0.16);
`;

const MenuRow = styled.div<{ $h: number; $pl: number; $on?: boolean; $c?: string }>`
  display: flex;
  align-items: center;
  height: ${(p) => p.$h}px;
  padding: 0 0 1px ${(p) => p.$pl}px;
  color: ${(p) => p.$c || INK};
  background: ${(p) => (p.$on ? '#e7e9ee' : 'none')};
`;

const MenuIcon = styled.span<{ $w: number }>`
  display: flex;
  flex: none;
  width: ${(p) => p.$w}px;
`;

const MenuText = styled.span`
  flex: 1;
`;

const SubArrow = styled.i`
  width: 5px;
  height: 8px;
  margin-right: 11px;
  background: ${MUTED};
  clip-path: polygon(0 0, 100% 50%, 0 100%);
`;

const MenuHead = styled.div`
  display: flex;
  align-items: center;
  height: 38px;
  padding: 0 0 2px 8px;
  background: #f3f4f6;
  color: #55607c;
`;

const Swatches = styled.div<{ $top: number; $bottom: number }>`
  display: grid;
  grid-template-columns: repeat(10, 21px);
  grid-auto-rows: 21px;
  column-gap: 6px;
  padding: ${(p) => p.$top}px 0 ${(p) => p.$bottom}px 6px;
`;

const Swatch = styled.i<{ $c: string; $on?: boolean }>`
  border: 1px solid ${(p) => (p.$on ? '#f9a31a' : '#e1e2e8')};
  background: ${(p) => p.$c};
  box-shadow: ${(p) => (p.$on ? 'inset 0 0 0 1px #fbe3b4' : 'none')};
`;

const MenuLine = styled.hr<{ $t: number; $b: number }>`
  height: 1px;
  margin: ${(p) => p.$t}px 0 ${(p) => p.$b}px;
  border: 0;
  background: #d9dbdf;
`;

const theme = ['#ffffff', '#000000', '#808080', '#000000', '#bae0e3', '#333399', '#ffffff', '#000000', '#daedef', '#2d2d8a'];
const shades = [
  '#f2f2f2', '#7f7f7f', '#e5e5e5', '#7f7f7f', '#a0d4d8', '#d0d0ef', '#f2f2f2', '#7f7f7f', '#bbdee0', '#cdcdee',
  '#d8d8d8', '#595959', '#cccccc', '#595959', '#73bfc5', '#a3a3df', '#d8d8d8', '#595959', '#8bc7ca', '#9d9ddd',
  '#bfbfbf', '#3f3f3f', '#b2b2b2', '#3f3f3f', '#3d8d94', '#7575d0', '#bfbfbf', '#3f3f3f', '#46989d', '#6c6ccd',
  '#a5a5a5', '#262626', '#606060', '#262626', '#1f474a', '#262673', '#a5a5a5', '#262626', '#234c4f', '#222267',
  '#7f7f7f', '#0c0c0c', '#3f3f3f', '#0c0c0c', '#0c1c1e', '#19194c', '#7f7f7f', '#0c0c0c', '#0e1e1f', '#161645',
];
const standard = ['#c00000', '#ff0000', '#ffc000', '#ffff00', '#92d050', '#00b050', '#00b0f0', '#0070c0', '#002060', '#7030a0'];
const recent = ['#54758f', '#e0ab6b', '#efe03c', '#50a8bf', '#54d28e', '#26dad0', '#fcf9a1', '#e2affb', '#fb8695', '#fd907a'];

const OutlineMenu = () => (
  <Menu>
    <MenuRow $h={34} $pl={10}>
      <MenuIcon $w={37}><Icon w={22} h={24} c="#444"><rect x="1" y="1" width="20" height="22" rx="1" /><path d="M1 23L21 1" stroke="#d04848" /></Icon></MenuIcon>
      <Text $dy={4}>无边框颜色</Text>
    </MenuRow>
    <MenuHead>主题颜色</MenuHead>
    <Swatches $top={6} $bottom={8}>{theme.map((c, i) => <Swatch key={i} $c={c} />)}</Swatches>
    <Swatches $top={0} $bottom={6}>{shades.map((c, i) => <Swatch key={i} $c={c} />)}</Swatches>
    <MenuHead>标准色</MenuHead>
    <Swatches $top={6} $bottom={6}>{standard.map((c, i) => <Swatch key={i} $c={c} />)}</Swatches>
    <MenuHead>最近使用颜色</MenuHead>
    <Swatches $top={6} $bottom={6}>{recent.map((c, i) => <Swatch key={i} $c={c} $on={i === 0} />)}</Swatches>
    <MenuLine $t={0} $b={3} />
    <MenuRow $h={41} $pl={12}>
      <MenuIcon $w={36}>
        <Icon w={23} h={23} c="none">
          <path d="M12 0a11.500 11.500 0 0 1 11 11h-7.500A4.500 4.500 0 0 0 12 7.500z" fill="#38425c" />
          <path d="M23 12a11.500 11.500 0 0 1-11 11v-7.500A4.500 4.500 0 0 0 15.500 12z" fill="#a3a8b5" />
          <path d="M11 23A11.500 11.500 0 0 1 0 12h7.500a4.500 4.500 0 0 0 3.500 3.500z" fill="#d6d8de" />
          <path d="M0 11A11.500 11.500 0 0 1 11 0v7.500A4.500 4.500 0 0 0 7.500 11z" fill="#b2b6c1" />
        </Icon>
      </MenuIcon>
      <MenuText>其他边框颜色(M)...</MenuText>
    </MenuRow>
    <MenuRow $h={39} $pl={13}>
      <MenuIcon $w={35}>
        <Icon w={20} h={20} c="#626a7e">
          <path d="M9.500 7L2.500 14.500 0.800 19.200 5.500 17.500 13 10.500M8 5.500l6.500 6.500M10 6.500c-1-3 1-5 2.500-4.500l1 2C15 1 18 0 19 2c1 1.500-1 3-2.500 4.500 2 .5 2.500 2 1.500 3.500-1 1-3 .7-4.500 0" />
        </Icon>
      </MenuIcon>
      <MenuText>取色器(E)</MenuText>
    </MenuRow>
    <MenuRow $h={42} $pl={13} $on>
      <MenuIcon $w={31}>
        <Icon w={18} h={14} c="none"><g fill="#5c6479"><rect y="0" width="18" height="1.500" /><rect y="4.500" width="18" height="3" /><rect y="10" width="18" height="4" /></g></Icon>
      </MenuIcon>
      <MenuText>线型(W)</MenuText><SubArrow />
    </MenuRow>
    <MenuRow $h={42} $pl={12}>
      <MenuIcon $w={32}>
        <Icon w={19} h={17} c="#7d8496" sw={1.400}><rect x="0.700" y="0.700" width="17.600" height="15.600" /><path d="M3.500 4.500h12M3.500 8h12" strokeDasharray="1.500 2" strokeLinecap="butt" /><path d="M3.500 12h12" /></Icon>
      </MenuIcon>
      <MenuText>虚线线型(S)</MenuText><SubArrow />
    </MenuRow>
    <MenuRow $h={43} $pl={13} $c="#a9a9a9">
      <MenuIcon $w={31}>
        <Icon w={16} h={18} c="#c6c6c6" sw={1.300}><path d="M0 3h15M12 0l3 3-3 3M16 9H1M4 6L1 9l3 3M0 15h15M12 12l3 3-3 3" /></Icon>
      </MenuIcon>
      <MenuText>箭头样式(R)</MenuText><SubArrow />
    </MenuRow>
    <MenuLine $t={3} $b={2} />
    <MenuRow $h={44} $pl={48}>更多设置(O)...</MenuRow>
  </Menu>
);

const WeightMenu = styled.div`
  position: absolute;
  left: 1322px;
  top: 578px;
  z-index: 3;
  display: flex;
  flex-direction: column;
  width: 267px;
  height: 318px;
  padding: 7px 0 0;
  background: #fff;
  box-shadow: 0 0 4px rgba(0, 0, 0, 0.25);
`;

const WeightRow = styled.div<{ $on?: boolean }>`
  display: flex;
  justify-content: flex-end;
  flex: none;
  height: 25px;
  margin: 0 12px 4px 7px;
  padding-right: 2px;
  background: ${(p) => (p.$on ? '#dce1e6' : 'none')};
`;

const WeightName = styled.span`
  padding-top: 4px;
  margin-right: 15px;
`;

const Stroke = styled.i<{ $h: number }>`
  width: 92px;
  height: ${(p) => p.$h}px;
  margin-top: ${(p) => Math.ceil(8 - p.$h / 2)}px;
  background: #000;
`;

const MoreLines = styled.div`
  display: flex;
  align-items: center;
  flex: 1;
  margin: 6px 1px 0;
  padding-left: 48px;
  border-top: 1px solid #bdbfc4;
`;

const Marker = styled.div`
  position: absolute;
  left: 1399px;
  top: 693px;
  z-index: 4;
  width: 157px;
  height: 41px;
  border: 3px solid #fb3a3a;
`;

const weights: [string, number][] = [
  ['0.25', 1], ['0.5', 1], ['0.75', 1], ['1', 2], ['1.5', 2], ['2.25', 3], ['3', 4], ['4.5', 6], ['6', 8],
];

/* ---------- recorder tab and watermark ---------- */

const Meter = styled.div`
  position: absolute;
  right: 0;
  top: 767px;
  width: 15px;
  height: 89px;
  padding: 10px 3px 10px 6px;
  border-radius: 6px 0 0 6px;
  background: #525a6b;
  border: 1px solid #3b3f4a;
  border-right: 0;
`;

const MeterBars = styled.div`
  height: 69px;
  background:
    repeating-linear-gradient(transparent 0 2px, #474c5a 2px 3px),
    linear-gradient(#353944 0 18px, #e0a83a 18px, #cfc94c 36px, #7fd07a 54px, #45c9b4);
`;

const Watermark = styled.svg`
  position: absolute;
  left: 1640px;
  top: 1090px;
  z-index: 2;
  filter: drop-shadow(0 0 1.5px rgba(0, 0, 0, 0.3));
`;

const Brand = () => (
  <Watermark width={420} height={210} viewBox="1640 1090 420 210" fill="#fcfdfd" stroke="#cfcfcf" strokeWidth={1}>
    <ellipse cx="1804.500" cy="1151" rx="15" ry="19" />
    <ellipse cx="1832" cy="1124" rx="14" ry="19.500" />
    <ellipse cx="1866" cy="1126" rx="15" ry="19" />
    <ellipse cx="1887.500" cy="1159" rx="15" ry="19" />
    <path d="M1846 1152c10 0 16 8 22 17s24 18 26 32c2 18-12 26-26 25-8-1-14-3-22-3s-14 3-24 3c-16 0-27-10-25-26 2-12 16-18 24-29 6-9 13-19 25-19z" />
    <text x="1655" y="1223" fontFamily="'Liberation Sans', sans-serif" fontWeight="700" fontSize="89" stroke="#cfcfcf" strokeWidth="1" textLength="136" lengthAdjust="spacingAndGlyphs">Bai</text>
    <text x="1811" y="1214" fontFamily="'Liberation Sans', sans-serif" fontWeight="700" fontSize="54" strokeWidth="1.800" stroke="#c8c8c8" textLength="64" lengthAdjust="spacingAndGlyphs">du</text>
    <text x="1905" y="1217" fontFamily="'Noto Sans CJK SC', sans-serif" fontWeight="900" fontSize="67" textLength="133" lengthAdjust="spacingAndGlyphs">经验</text>
    <text x="1660" y="1274" fontFamily="'Noto Sans', sans-serif" fontWeight="500" fontSize="41" strokeWidth="0.500" textLength="383" lengthAdjust="spacingAndGlyphs">jingyan.baidu.com</text>
  </Watermark>
);

export default function App() {
  return (
    <Window>
      <Global />
      <TopTabs />
      <Ribbon />
      <Body>
        <Slides />
        <StageArea />
        <TaskStrip />
      </Body>
      <StatusLine />
      <AlignBar />
      <OutlineMenu />
      <WeightMenu>
        {weights.map(([name, h]) => (
          <WeightRow key={name} $on={name === '1.5'}><WeightName>{name} 磅</WeightName><Stroke $h={h} /></WeightRow>
        ))}
        <MoreLines>其他线条(M)...</MoreLines>
      </WeightMenu>
      <Marker />
      <Meter><MeterBars /></Meter>
      <Brand />
    </Window>
  );
}
